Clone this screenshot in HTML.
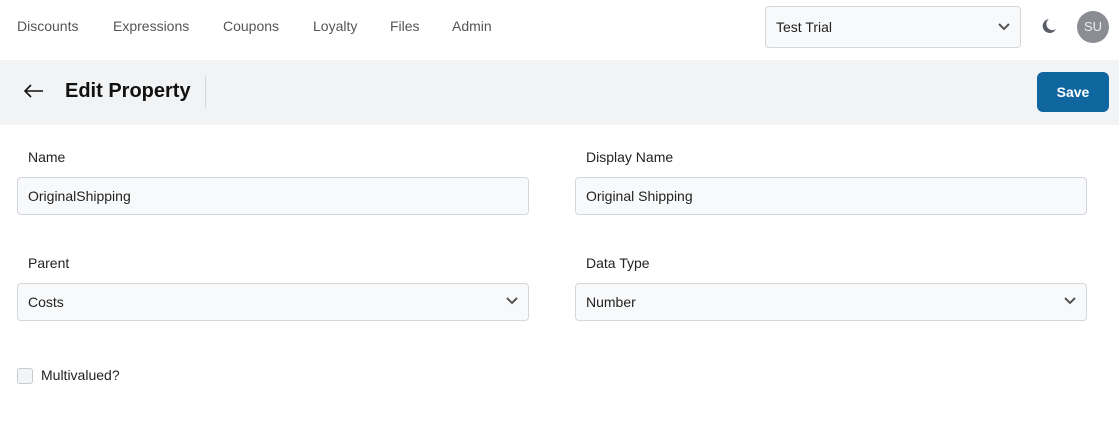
<!DOCTYPE html>
<html><head><style>
*{box-sizing:border-box;margin:0;padding:0}
body{width:1119px;height:423px;background:#fff;font-family:"Liberation Sans",sans-serif;color:#111;position:relative;overflow:hidden}
.a{position:absolute}
.nav{font-size:14px;color:#555;top:18px}
.inp{position:absolute;height:38px;border:1px solid #d4d6da;border-radius:4px;background:#f8f9fa;font-size:14px;padding:0 10px;line-height:36px;color:#222}
.lbl{position:absolute;font-size:14px;color:#222}
.chev{position:absolute;right:10px;top:13px}
</style></head><body>
<div class="a nav" style="left:17px">Discounts</div>
<div class="a nav" style="left:113px">Expressions</div>
<div class="a nav" style="left:223px">Coupons</div>
<div class="a nav" style="left:313px">Loyalty</div>
<div class="a nav" style="left:390px">Files</div>
<div class="a nav" style="left:452px">Admin</div>
<div class="inp" style="left:765px;top:6px;width:256px;height:42px;line-height:40px">Test Trial<svg class="chev" style="top:16px" width="12" height="8" viewBox="0 0 12 8"><path d="M1 1l5 5 5-5" stroke="#555" stroke-width="2" fill="none"/></svg></div>
<svg class="a" style="left:1040px;top:18px" width="17" height="17" viewBox="0 0 17 17"><path d="M9 1a7 7 0 1 0 7 10A6 6 0 0 1 9 1z" fill="#5a5d66"/></svg>
<div class="a" style="left:1077px;top:11px;width:32px;height:32px;border-radius:50%;background:#8a8d93;color:#eee;font-size:13px;text-align:center;line-height:32px">SU</div>
<div class="a" style="left:0;top:60px;width:1119px;height:65px;background:#f2f3f5"></div>
<svg class="a" style="left:23px;top:84px" width="21" height="14" viewBox="0 0 21 14"><path d="M20 7H2M8 1L2 7l6 6" stroke="#111" stroke-width="1.6" fill="none"/></svg>
<div class="a" style="left:65px;top:80px;font-size:20px;font-weight:bold">Edit Property</div>
<div class="a" style="left:205px;top:76px;width:1px;height:32px;background:#d4d6da"></div>
<div class="a" style="left:1037px;top:72px;width:72px;height:40px;background:#10669f;border-radius:6px;color:#fff;font-weight:bold;font-size:14px;text-align:center;line-height:40px">Save</div>
<div class="lbl" style="left:28px;top:149px">Name</div>
<div class="lbl" style="left:586px;top:149px">Display Name</div>
<div class="inp" style="left:17px;top:177px;width:512px">OriginalShipping</div>
<div class="inp" style="left:575px;top:177px;width:512px">Original Shipping</div>
<div class="lbl" style="left:28px;top:255px">Parent</div>
<div class="lbl" style="left:586px;top:255px">Data Type</div>
<div class="inp" style="left:17px;top:283px;width:512px">Costs<svg class="chev" width="12" height="8" viewBox="0 0 12 8"><path d="M1 1l5 5 5-5" stroke="#555" stroke-width="2" fill="none"/></svg></div>
<div class="inp" style="left:575px;top:283px;width:512px">Number<svg class="chev" width="12" height="8" viewBox="0 0 12 8"><path d="M1 1l5 5 5-5" stroke="#555" stroke-width="2" fill="none"/></svg></div>
<div class="a" style="left:17px;top:368px;width:16px;height:16px;border:1px solid #c8cacd;border-radius:3px;background:#f3f4f6"></div>
<div class="lbl" style="left:41px;top:367px">Multivalued?</div>
</body></html>
